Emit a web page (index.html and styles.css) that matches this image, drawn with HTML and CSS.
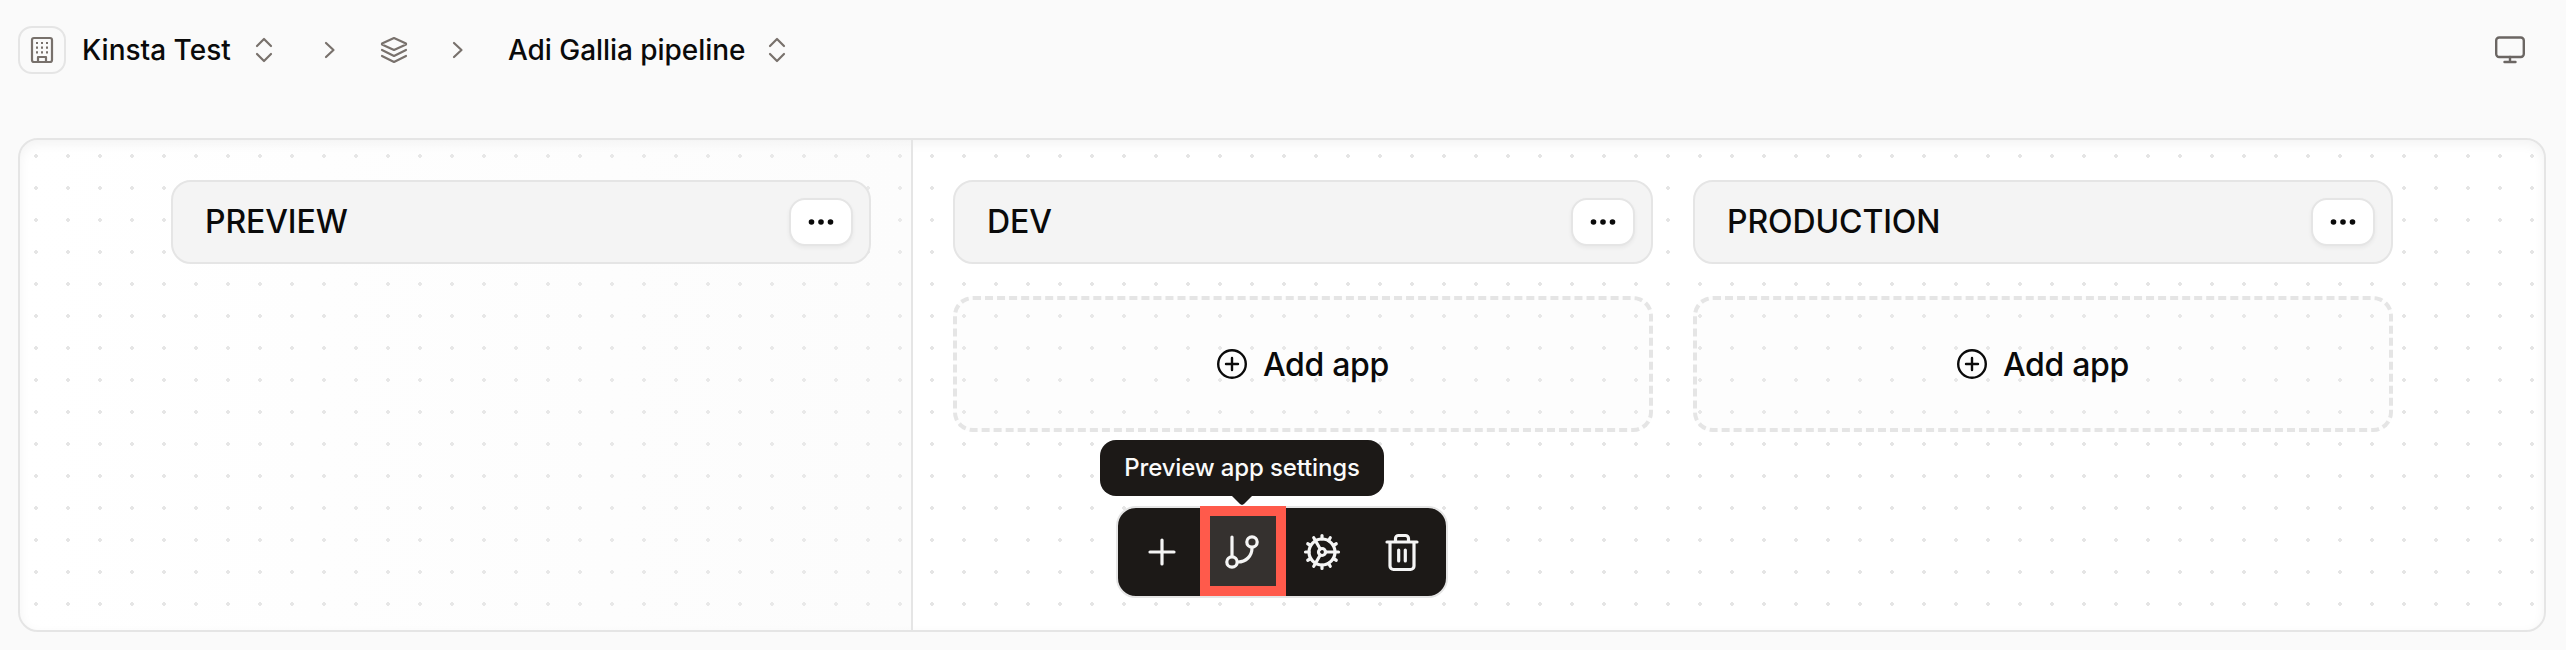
FILE: index.html
```html
<!DOCTYPE html>
<html lang="en">
<head>
    <meta charset="UTF-8">
    <meta name="viewport" content="width=device-width, initial-scale=1.0">
    <title>Adi Gallia pipeline</title>
    <link rel="stylesheet" href="styles.css">
</head>
<body>
    <!-- Breadcrumbs -->
    <header class="topbar">
        <nav class="breadcrumbs">
            <span class="company-icon">
                <svg width="22" height="26" viewBox="0 0 22 26">
                    <rect x="1" y="1" width="20" height="24" rx="2"/>
                    <path d="M7 25v-5h8v5"/>
                    <path d="M5 6h2M10 6h2M15 6h2M5 10.700h2M10 10.700h2M15 10.700h2M5 15.400h2M10 15.400h2M15 15.400h2"/>
                </svg>
            </span>
            <span class="crumb company">Kinsta Test</span>
            <svg class="sorter" width="16" height="24" viewBox="0 0 16 24"><path d="M1 8l7-7 7 7M1 16l7 7 7-7"/></svg>
            <svg class="chevron" width="10" height="16" viewBox="0 0 10 16"><path d="M1 1l7.500 7L1 15"/></svg>
            <svg class="layers" width="26" height="26" viewBox="0 0 26 26">
                <path d="M13 1l12 5.500v1L13 13 1 7.500v-1z"/>
                <path d="M1 13l12 6 12-6M1 19l12 6 12-6"/>
            </svg>
            <svg class="chevron" width="10" height="16" viewBox="0 0 10 16"><path d="M1 1l7.500 7L1 15"/></svg>
            <span class="crumb pipeline">Adi Gallia pipeline</span>
            <svg class="sorter" width="16" height="24" viewBox="0 0 16 24"><path d="M1 8l7-7 7 7M1 16l7 7 7-7"/></svg>
        </nav>
        <svg class="monitor" width="30" height="28" viewBox="0 0 30 28">
            <rect x="1.200" y="1.500" width="27.600" height="19.500" rx="3"/>
            <path d="M15 21v5M9.500 26h11"/>
        </svg>
    </header>

    <!-- Pipeline board -->
    <main class="board">
        <section class="preview">
            <div class="stage-header">
                <h2>PREVIEW</h2>
                <button class="more"><svg width="26" height="6" viewBox="0 0 26 6"><circle cx="3.500" cy="3" r="2.800"/><circle cx="13" cy="3" r="2.800"/><circle cx="22.500" cy="3" r="2.800"/></svg></button>
            </div>
        </section>
        <section class="stages">
            <div class="stage">
                <div class="stage-header">
                    <h2>DEV</h2>
                    <button class="more"><svg width="26" height="6" viewBox="0 0 26 6"><circle cx="3.500" cy="3" r="2.800"/><circle cx="13" cy="3" r="2.800"/><circle cx="22.500" cy="3" r="2.800"/></svg></button>
                </div>
                <button class="add-app">
                    <svg width="30" height="30" viewBox="0 0 30 30"><circle cx="15" cy="15" r="13.800"/><path d="M15 9v12M9 15h12"/></svg>
                    Add app
                </button>
            </div>
            <div class="stage">
                <div class="stage-header">
                    <h2>PRODUCTION</h2>
                    <button class="more"><svg width="26" height="6" viewBox="0 0 26 6"><circle cx="3.500" cy="3" r="2.800"/><circle cx="13" cy="3" r="2.800"/><circle cx="22.500" cy="3" r="2.800"/></svg></button>
                </div>
                <button class="add-app">
                    <svg width="30" height="30" viewBox="0 0 30 30"><circle cx="15" cy="15" r="13.800"/><path d="M15 9v12M9 15h12"/></svg>
                    Add app
                </button>
            </div>
        </section>

        <!-- Floating toolbar -->
        <div class="toolbar">
            <button class="tool">
                <svg width="40" height="40" viewBox="0 0 40 40"><path d="M20 8v24M8 20h24"/></svg>
            </button>
            <button class="tool active">
                <svg width="40" height="40" viewBox="0 0 40 40">
                    <path d="M10 5V24M16 30c8 0 14-6 14-14"/>
                    <circle cx="10" cy="30" r="5.200"/>
                    <circle cx="30" cy="10" r="5.200"/>
                </svg>
                <span class="highlight"></span>
                <span class="tooltip">Preview app settings</span>
            </button>
            <button class="tool">
                <svg width="40" height="40" viewBox="0 0 40 40">
                    <circle cx="20" cy="20" r="13"/>
                    <circle cx="20" cy="20" r="3.500"/>
                    <path d="M23.500 20H33M18.250 17L13.500 8.700M18.250 23L13.500 31.300"/>
                    <path d="M33 20h3.500M31.260 26.500l3 1.750M26.500 31.260l1.750 3M20 33v3.500M13.500 31.260l-1.750 3M8.740 26.500l-3 1.750M7 20H3.500M8.740 13.500l-3-1.750M13.500 8.740l-1.750-3M20 7V3.500M26.500 8.740l1.750-3M31.260 13.500l3-1.750"/>
                </svg>
            </button>
            <button class="tool">
                <svg width="40" height="40" viewBox="0 0 40 40">
                    <path d="M5 10h30M8 10v24a3.500 3.500 0 0 0 3.500 3.500h17a3.500 3.500 0 0 0 3.500-3.500V10M13.500 10V6.500a3 3 0 0 1 3-3h7a3 3 0 0 1 3 3V10M16.700 18v11M23.300 18v11"/>
                </svg>
            </button>
        </div>
    </main>
</body>
</html>
```
FILE: styles.css
```css
* {
    box-sizing: border-box;
}

body {
    font-family: Inter, "Liberation Sans", sans-serif;
    font-weight: 500;
    color: #0a0a0a;
    background-color: #fafafa;
    margin: 0;
    height: 650px;
    padding: 0 20px 18px 18px;
    overflow: hidden;
    display: flex;
    flex-direction: column;
}

svg {
    display: block;
    flex: none;
    fill: none;
    stroke: currentColor;
    stroke-width: 2.2;
    stroke-linecap: round;
    stroke-linejoin: round;
    overflow: visible;
}

button {
    font: inherit;
    color: inherit;
    padding: 0;
    cursor: pointer;
}

/* Top bar */
.topbar {
    height: 100px;
    margin-bottom: 38px;
    padding-right: 21px;
    display: flex;
    align-items: center;
    justify-content: space-between;
    color: #78716c;
}

.breadcrumbs {
    display: flex;
    align-items: center;
}

.company-icon {
    width: 48px;
    height: 48px;
    border: 2px solid #e5e5e5;
    border-radius: 14px;
    display: flex;
    align-items: center;
    justify-content: center;
}

.company-icon svg {
    stroke-linecap: butt;
}

.crumb {
    font-size: 28px;
    line-height: 40px;
    color: #0a0a0a;
    white-space: nowrap;
}

.company {
    width: 174px;
    margin-left: 16px;
}

.chevron {
    margin-left: 53px;
}

.layers {
    margin-left: 46px;
}

.layers + .chevron {
    margin-left: 46px;
}

.pipeline {
    width: 261px;
    margin-left: 45px;
    letter-spacing: -0.05px;
}

.monitor {
    color: #6b6663;
    stroke-width: 2.4;
}

/* Board */
.board {
    position: relative;
    flex: 1;
    display: flex;
    border: 2px solid #e5e5e5;
    border-radius: 20px;
    overflow: hidden;
    background: radial-gradient(circle, #e5e5e5 2px, transparent 2px) 0 0 / 32px 32px #fff;
    box-shadow: inset 0 4px 12px rgba(0, 0, 0, 0.05);
}

.preview {
    width: 893px;
    padding: 40px 40px 0 151px;
    border-right: 2px solid #e5e5e5;
    background: linear-gradient(to right, rgba(245, 245, 245, 0), rgba(245, 245, 245, 0.3));
}

.stages {
    display: flex;
    gap: 40px;
    padding: 40px 0 0 40px;
}

.stage {
    width: 700px;
    display: flex;
    flex-direction: column;
    gap: 32px;
}

.stage-header {
    height: 84px;
    padding: 0 16px 0 32px;
    display: flex;
    align-items: center;
    justify-content: space-between;
    background-color: #f4f4f4;
    border: 2px solid #e5e5e5;
    border-radius: 20px;
}

.stage-header h2 {
    margin: 0;
    font-size: 32px;
    font-weight: 500;
    line-height: 40px;
    letter-spacing: -0.1px;
}

.more {
    width: 64px;
    height: 48px;
    display: flex;
    align-items: center;
    justify-content: center;
    background-color: #fff;
    border: 2px solid #e5e5e5;
    border-radius: 16px;
    box-shadow: 0 2px 4px rgba(0, 0, 0, 0.05);
}

.more svg {
    fill: currentColor;
    stroke: none;
}

.add-app {
    height: 136px;
    display: flex;
    align-items: center;
    justify-content: center;
    gap: 16px;
    font-size: 32px;
    letter-spacing: -0.3px;
    background-color: rgba(245, 245, 245, 0.2);
    border: 4px dashed #e5e5e5;
    border-radius: 20px;
}

.add-app svg {
    stroke-width: 2.4;
}

/* Toolbar */
.toolbar {
    position: absolute;
    left: 50%;
    bottom: 32px;
    transform: translateX(-50%);
    display: flex;
    padding: 4px;
    background-color: #1c1917;
    border: 2px solid #e5e5e5;
    border-radius: 20px;
}

.tool {
    position: relative;
    width: 80px;
    height: 80px;
    display: flex;
    align-items: center;
    justify-content: center;
    color: #f5f5f5;
    background: none;
    border: none;
    border-radius: 16px;
}

.tool svg {
    stroke-width: 3.2;
}

.tool.active {
    background-color: #35312f;
}

.highlight {
    position: absolute;
    top: -6px;
    left: -2px;
    width: 86px;
    height: 90px;
    border: 10px solid #ff5a4b;
}

.tooltip {
    position: absolute;
    bottom: 96px;
    left: 50%;
    width: 284px;
    transform: translateX(-50%);
    font-size: 24px;
    line-height: 56px;
    letter-spacing: -0.15px;
    text-align: center;
    white-space: nowrap;
    color: #fafafa;
    background-color: #1c1917;
    border-radius: 16px;
}

.tooltip::after {
    content: "";
    position: absolute;
    top: 100%;
    left: 50%;
    width: 20px;
    height: 9px;
    transform: translateX(-50%);
    background-color: #1c1917;
    clip-path: polygon(0 0, 100% 0, 60% 90%, 50% 100%, 40% 90%);
}
```
